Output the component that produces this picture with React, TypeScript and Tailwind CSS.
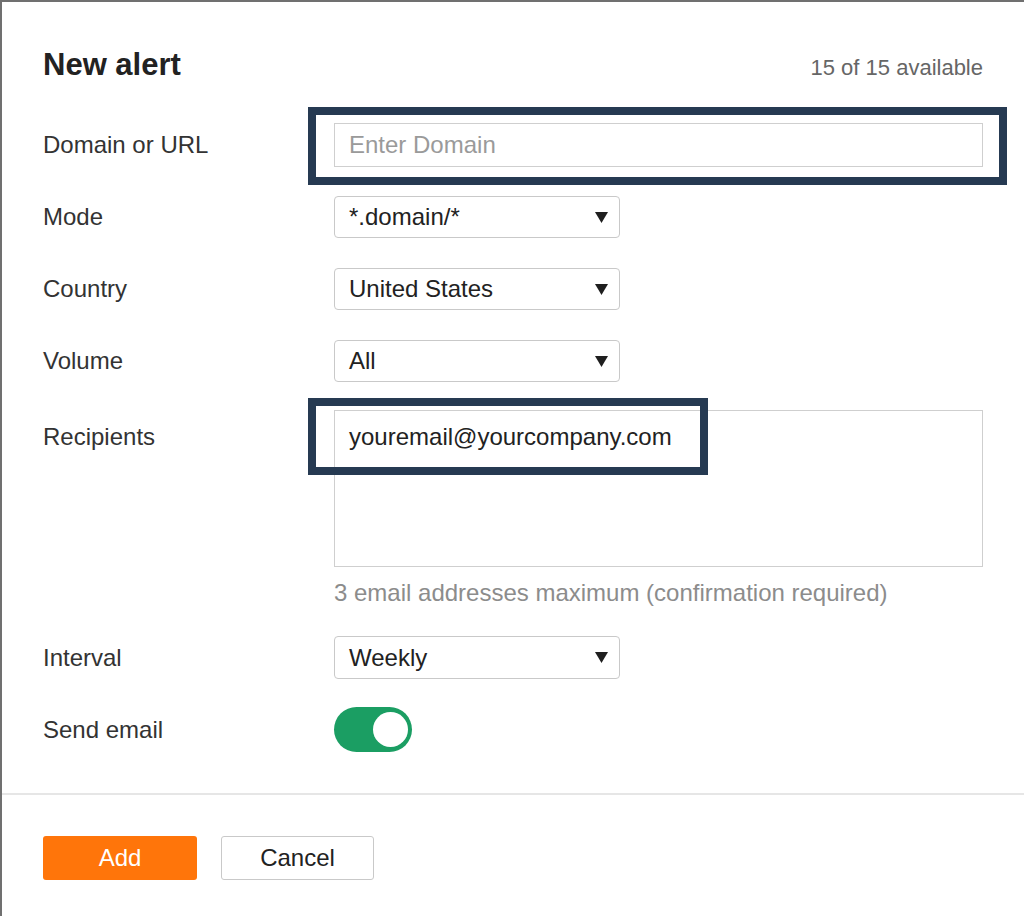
import React from "react";

function Caret() {
  return (
    <svg width="13" height="11" viewBox="0 0 13 11" className="shrink-0">
      <polygon points="0,0 13,0 6.5,11" fill="#1f1f1f" />
    </svg>
  );
}

function Select({ value, h = "h-[42px]" }: { value: string; h?: string }) {
  return (
    <div className={"w-[286px] border border-[#c9c9c9] rounded-[4px] bg-white flex items-center justify-between pl-[14px] pr-[11px] text-[24px] leading-[28px] text-[#222] " + h}>
      <span>{value}</span>
      <Caret />
    </div>
  );
}

function Row({ label, children, className = "" }: { label: string; children: React.ReactNode; className?: string }) {
  return (
    <div className={"flex items-center " + className}>
      <div className="w-[291px] shrink-0 text-[24px] leading-[28px] text-[#333]">{label}</div>
      <div className="flex-1 relative">{children}</div>
    </div>
  );
}

export default function App() {
  return (
    <div className="w-[1024px] h-[916px] bg-white border-l-2 border-t-2 border-[#707070] font-[family-name:'Liberation_Sans',Arial,sans-serif] overflow-hidden">
      <div className="flex items-baseline justify-between pl-[41px] pr-[41px] pt-[45px]">
        <div className="text-[31px] font-bold leading-[36px] text-[#222]">New alert</div>
        <div className="text-[22px] leading-[36px] text-[#666]">15 of 15 available</div>
      </div>

      <div className="pl-[41px] pr-[41px]">
        <Row label="Domain or URL" className="mt-[37px]">
          <div className="h-[44px] border border-[#cfcfcf] bg-white flex items-center px-[14px] text-[24px] leading-[28px] text-[#9a9a9a]">
            Enter Domain
          </div>
          <div className="absolute left-[-26px] top-[-16px] right-[-24px] bottom-[-18px] border-[8px] border-[#263a52] pointer-events-none" />
        </Row>

        <Row label="Mode" className="mt-[29px]">
          <Select value="*.domain/*" />
        </Row>
        <Row label="Country" className="mt-[30px]">
          <Select value="United States" />
        </Row>
        <Row label="Volume" className="mt-[30px]">
          <Select value="All" />
        </Row>

        <div className="flex items-start mt-[28px]">
          <div className="w-[291px] shrink-0 pt-[13px] text-[24px] leading-[28px] text-[#333]">Recipients</div>
          <div className="flex-1 relative">
            <div className="h-[157px] border border-[#cfcfcf] bg-white pt-[12px] px-[14px] text-[24px] leading-[28px] text-[#222]">
              youremail@yourcompany.com
            </div>
            <div className="absolute left-[-26px] top-[-12px] w-[400px] h-[77px] border-[8px] border-[#263a52] pointer-events-none" />
          </div>
        </div>
        <div className="ml-[291px] mt-[12px] text-[24px] leading-[28px] text-[#8c8c8c]">
          3 email addresses maximum (confirmation required)
        </div>

        <Row label="Interval" className="mt-[29px]">
          <Select value="Weekly" h="h-[43px]" />
        </Row>

        <Row label="Send email" className="mt-[28px]">
          <div className="w-[78px] h-[45px] rounded-full bg-[#1b9e63] flex items-center justify-end pr-[4px]">
            <div className="w-[35px] h-[35px] rounded-full bg-white" />
          </div>
        </Row>
      </div>

      <div className="mt-[41px] h-[2px] bg-[#e6e6e6]" />

      <div className="pl-[41px] mt-[41px] flex gap-[24px]">
        <div className="w-[154px] h-[44px] rounded-[3px] bg-[#ff750a] flex items-center justify-center text-[24px] leading-[28px] text-white">
          Add
        </div>
        <div className="w-[153px] h-[44px] rounded-[3px] border border-[#c9c9c9] bg-white flex items-center justify-center text-[24px] leading-[28px] text-[#222]">
          Cancel
        </div>
      </div>
    </div>
  );
}
